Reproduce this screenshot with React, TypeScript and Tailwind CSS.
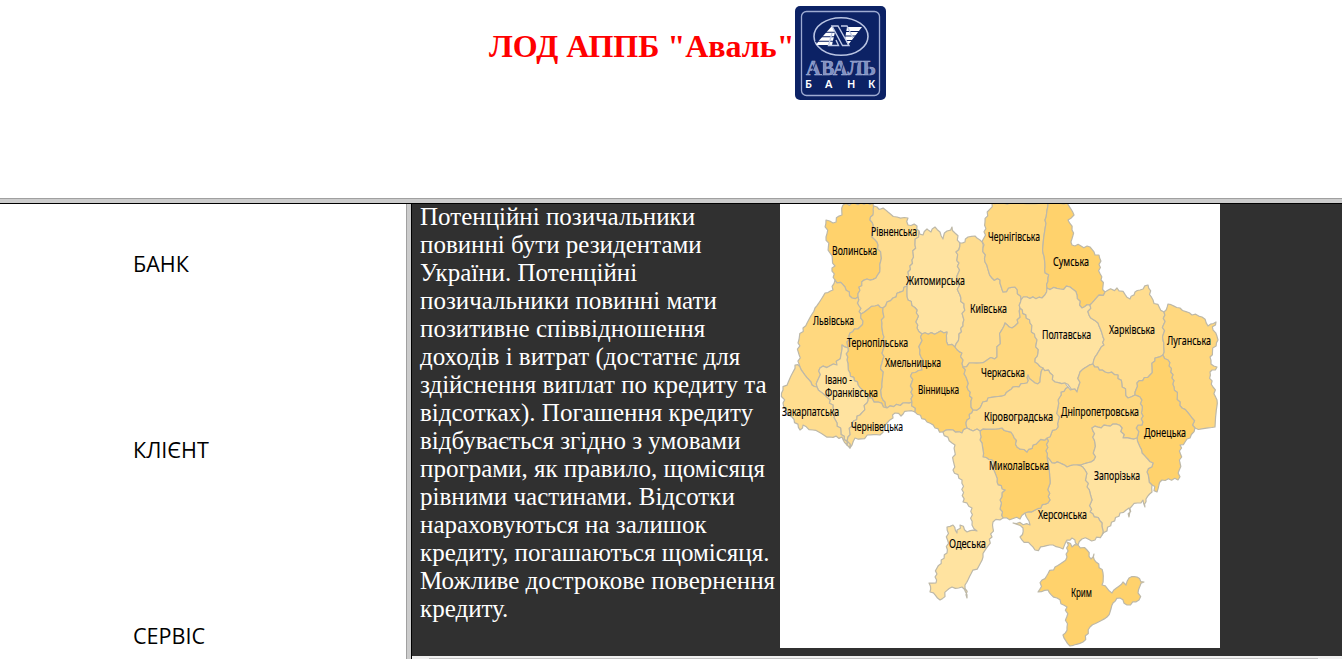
import React from "react";

type Point = [number, number];

const A = "#ffd26c";
const B = "#ffd87f";
const C = "#ffdd8f";
const D = "#ffe3a0";

const regions: { fill: string; outline: string }[] = [
  // Волинська
  { fill: A, outline: "843,205 852,203 873,203 873,215 870,220 873,228 872,237 877,242 881,255 880,268 876,278 867,279 859,287 858,297 852,298 845,287 835,280 832,268 835,266 830,253 826,237 826,220 833,223 842,215" },
  // Рівненська
  { fill: C, outline: "873,215 874,206 877,207 888,212 897,217 908,218 908,225 917,226 919,231 915,245 912,260 908,272 907,286 893,298 883,308 875,306 861,314 859,306 858,297 859,287 867,279 876,278 880,268 881,255 877,242 872,237 873,228 870,220" },
  // Житомирська
  { fill: D, outline: "919,231 923,235 927,229 931,232 935,227 940,232 943,239 947,231 952,227 955,233 960,243 956,252 959,263 957,280 960,295 964,307 963,323 959,337 955,347 948,345 947,332 922,334 917,328 917,310 908,300 907,286 908,272 912,260 915,245" },
  // Львівська
  { fill: B, outline: "835,280 833,290 825,293 815,308 803,328 798,343 800,367 812,385 817,387 820,368 837,365 842,345 848,348 847,342 850,333 860,327 863,321 861,314 859,306 858,297 852,298 845,287" },
  // Тернопільська
  { fill: A, outline: "861,314 875,306 883,308 882,323 884,337 882,363 882,387 883,400 887,408 878,402 868,398 858,385 850,373 847,360 848,348 847,342 850,333 860,327 863,321" },
  // Хмельницька
  { fill: B, outline: "907,286 893,298 883,308 882,323 884,337 882,363 882,387 883,400 887,408 903,403 912,402 912,373 922,370 923,360 920,350 922,334 917,328 917,310 908,300" },
  // Івано-Франківська
  { fill: D, outline: "817,387 830,400 833,408 837,423 847,445 850,448 848,437 852,423 860,415 867,403 868,398 858,385 850,373 847,360 848,348 842,345 837,365 820,368" },
  // Закарпатська
  { fill: C, outline: "795,365 783,390 783,403 792,417 800,430 803,425 813,430 830,437 842,437 847,445 837,423 833,408 830,400 817,387 812,385 800,367" },
  // Чернівецька
  { fill: C, outline: "850,448 855,438 880,435 883,428 893,418 895,413 901,416 908,411 915,412 912,402 903,403 887,408 878,402 868,398 867,403 860,415 852,423 848,437" },
  // Вінницька
  { fill: A, outline: "922,334 947,332 948,345 955,347 962,353 963,367 966,377 967,387 972,398 973,410 967,420 967,428 962,433 953,430 943,432 935,428 927,422 915,412 912,402 912,373 922,370 923,360 920,350" },
  // Київська
  { fill: C, outline: "960,243 965,242 968,237 975,236 980,240 983,248 985,262 992,278 1000,280 1003,292 1015,287 1021,300 1020,308 1018,323 1012,328 1005,323 1000,337 997,357 980,363 973,363 963,367 962,353 955,347 959,337 963,323 964,307 960,295 957,280 959,263 956,252" },
  // Чернігівська
  { fill: B, outline: "992,203 985,222 983,248 985,262 992,278 1000,280 1003,292 1015,287 1021,300 1027,297 1042,298 1047,288 1048,278 1045,267 1043,253 1045,220 1048,203" },
  // Сумська
  { fill: A, outline: "1048,203 1067,203 1074,215 1068,220 1072,230 1072,245 1090,247 1095,255 1099,255 1101,280 1105,292 1090,305 1082,308 1077,295 1070,287 1060,289 1047,288 1048,278 1045,267 1043,253 1045,220" },
  // Черкаська
  { fill: B, outline: "963,367 973,363 980,363 997,357 1000,337 1005,323 1012,328 1018,323 1020,308 1030,323 1035,337 1038,353 1035,362 1043,368 1040,382 1035,383 1028,375 1027,383 1013,387 1005,395 988,398 980,408 973,410 972,398 967,387 966,377" },
  // Полтавська
  { fill: D, outline: "1021,300 1027,297 1042,298 1047,288 1060,289 1070,287 1077,295 1082,308 1090,305 1089,315 1098,323 1103,337 1104,345 1095,357 1093,364 1080,372 1077,392 1065,383 1055,382 1050,373 1043,368 1035,362 1038,353 1035,337 1030,323 1020,308" },
  // Харківська
  { fill: C, outline: "1090,305 1105,292 1117,288 1130,299 1135,292 1140,290 1148,285 1153,300 1164,312 1163,340 1163,355 1155,358 1150,375 1137,383 1135,395 1128,398 1118,375 1105,372 1093,364 1095,357 1104,345 1103,337 1098,323 1089,315" },
  // Луганська
  { fill: B, outline: "1164,312 1168,304 1180,308 1192,315 1202,317 1208,326 1216,322 1213,330 1218,340 1210,357 1211,364 1217,367 1210,372 1213,387 1217,400 1215,427 1195,428 1192,418 1182,408 1174,387 1168,360 1163,355 1163,340" },
  // Донецька
  { fill: A, outline: "1163,355 1168,360 1174,387 1182,408 1192,418 1195,428 1190,438 1180,445 1180,463 1178,480 1162,480 1157,492 1152,485 1147,472 1153,463 1142,453 1137,438 1138,425 1142,425 1142,410 1140,397 1135,395 1137,383 1150,375 1155,358" },
  // Дніпропетровська
  { fill: B, outline: "1093,364 1105,372 1118,375 1128,398 1135,395 1140,397 1142,410 1142,425 1138,425 1137,438 1123,438 1122,428 1113,424 1092,428 1095,443 1094,460 1077,465 1067,467 1060,463 1052,463 1047,457 1047,438 1058,427 1058,400 1061,392 1068,387 1077,392 1080,372" },
  // Запорізька
  { fill: D, outline: "1092,428 1113,424 1122,428 1123,438 1137,438 1142,453 1153,463 1147,472 1152,485 1152,492 1146,499 1145,507 1143,500 1132,506 1129,517 1129,508 1120,513 1102,535 1102,523 1090,512 1092,500 1087,487 1085,470 1077,465 1094,460 1095,443" },
  // Херсонська
  { fill: C, outline: "1052,463 1060,463 1067,467 1077,465 1085,470 1087,487 1092,500 1090,512 1102,523 1102,535 1095,540 1082,539 1078,545 1072,538 1067,540 1063,549 1053,545 1035,550 1020,537 1023,528 1013,523 1030,525 1027,518 1025,513 1035,510 1048,503 1050,480 1047,457" },
  // Миколаївська
  { fill: A, outline: "980,431 1002,428 1013,435 1017,447 1027,452 1033,445 1047,438 1047,457 1050,480 1048,503 1035,510 1025,513 1020,519 1003,518 1000,500 1005,490 997,482 992,460 983,457 980,440" },
  // Кіровоградська
  { fill: C, outline: "967,428 967,420 973,410 980,408 988,398 1005,395 1013,387 1027,383 1028,375 1035,383 1040,382 1043,368 1050,373 1055,382 1065,383 1068,387 1061,392 1058,400 1058,427 1047,438 1033,445 1027,452 1017,447 1013,435 1002,428 980,431" },
  // Одеська
  { fill: D, outline: "943,432 953,430 962,433 967,428 980,431 980,440 983,457 992,460 997,482 1005,490 1000,500 1003,518 993,522 992,537 983,557 965,585 967,598 962,587 952,587 940,600 930,592 929,583 936,583 937,568 947,553 947,527 953,525 957,533 960,525 967,532 977,531 972,525 972,508 963,502 962,480 953,470 955,445 952,443" },
  // Крим
  { fill: A, outline: "1067,542 1072,547 1078,545 1087,550 1091,559 1094,554 1096,562 1103,573 1102,585 1112,593 1123,582 1126,585 1129,578 1137,577 1144,582 1140,586 1139,600 1127,605 1120,598 1113,603 1107,617 1090,627 1083,642 1070,646 1063,635 1067,627 1067,607 1057,598 1048,590 1038,592 1042,580 1055,567 1067,557" },
];

const labels: [string, number, number, number][] = [
  ["Рівненська", 871, 236, 46], ["Волинська", 832, 255, 45], ["Житомирська", 906, 285, 59],
  ["Чернігівська", 988, 241, 52], ["Сумська", 1053, 266, 36], ["Київська", 970, 313, 37],
  ["Львівська", 813, 325, 41], ["Тернопільська", 847, 347, 61], ["Хмельницька", 885, 367, 56],
  ["Полтавська", 1042, 339, 49], ["Харківська", 1109, 334, 46], ["Луганська", 1167, 345, 44],
  ["Черкаська", 981, 377, 44], ["Івано -", 825, 384, 27], ["Франківська", 825, 397, 53],
  ["Вінницька", 918, 394, 41], ["Закарпатська", 782, 416, 57], ["Чернівецька", 851, 431, 52],
  ["Кіровоградська", 984, 421, 69], ["Дніпропетровська", 1061, 416, 78], ["Донецька", 1144, 437, 42],
  ["Миколаївська", 989, 470, 60], ["Запорізька", 1094, 480, 46], ["Херсонська", 1038, 519, 49],
  ["Одеська", 949, 548, 37], ["Крим", 1071, 597, 21],
];

// Roughens an edge; the offset depends only on its two ends, so neighbours share one border.
function roughEdge(a: Point, b: Point): Point[] {
  const flip = a[0] > b[0] || (a[0] === b[0] && a[1] > b[1]);
  const [p, q] = flip ? [b, a] : [a, b];
  const dx = q[0] - p[0];
  const dy = q[1] - p[1];
  const len = Math.hypot(dx, dy);
  const n = Math.max(1, Math.round(len / 3.2));
  const points: Point[] = [];
  for (let i = 1; i < n; i++) {
    const s = Math.sin(p[0] * 12.9 + p[1] * 78.2 + q[0] * 3.7 + i * 37.7) * 43758.5;
    const off = (s - Math.floor(s) - 0.5) * 3.4;
    points.push([p[0] + (dx * i) / n - (dy / len) * off, p[1] + (dy * i) / n + (dx / len) * off]);
  }
  return flip ? points.reverse() : points;
}

function roughPath(outline: string): string {
  const pts = outline.split(" ").map((s) => s.split(",").map(Number) as Point);
  const all: Point[] = [];
  pts.forEach((p, i) => all.push(p, ...roughEdge(p, pts[(i + 1) % pts.length])));
  return "M" + all.map(([x, y]) => `${x.toFixed(1)} ${y.toFixed(1)}`).join("L") + "Z";
}

function UkraineMap() {
  return (
    <svg className="block h-[444px] w-[440px] shrink-0 bg-white" viewBox="780 204 440 444">
      <g stroke="#bdb8a8" strokeWidth="1.2" strokeLinejoin="round">
        {regions.map((r, i) => <path key={i} d={roughPath(r.outline)} fill={r.fill} />)}
      </g>
      <g className="font-['Noto_Sans',sans-serif] text-[13px]" fill="#000" stroke="#000" strokeWidth="0.15">
        {labels.map(([name, x, y, w]) => (
          <text key={name} x={x} y={y} textLength={w} lengthAdjust="spacingAndGlyphs">{name}</text>
        ))}
      </g>
    </svg>
  );
}

function AvalLogo() {
  return (
    <svg className="block h-[94px] w-[91px] shrink-0" viewBox="0 0 91 94">
      <rect width="91" height="94" rx="5" fill="#0c2265" />
      <rect x="6.5" y="5.5" width="78" height="84" rx="5" fill="none" stroke="#9eabd2" strokeWidth="1.3" />
      <ellipse cx="46" cy="30.5" rx="27" ry="18.8" fill="none" stroke="#b8c3e2" strokeWidth="1.6" />
      <path d="M37 20L40 26L37 39H21L24 34.5Z" fill="#fff" />
      <path d="M52 21H67L53 39L50 33Z" fill="#fff" />
      <path d="M20 35.2H40M26 30.7H40M30 26.2H40M50 25.5H66M50 30H62M50 34.5H60" stroke="#0c2265" strokeWidth="1.1" />
      <path d="M37 20H43L54 39.5H47.5ZM46 20H52L58 32M37 27L33.500 39.500H43.500L41 34" fill="none" stroke="#c2cce8" strokeWidth="1.4" />
      <text x="11" y="69" textLength="70" lengthAdjust="spacingAndGlyphs" fill="#7f8fc0" stroke="#a9b5da" strokeWidth=".5" className="font-['Liberation_Serif',serif] text-[20.5px] font-bold">АВАЛЬ</text>
      <path d="M16 69L21 56M27.500 56V69M45 69L49 56M59 69L63 56M74 56V69" stroke="#0c2265" strokeWidth=".8" />
      <g fill="#fff" className="font-['Noto_Sans',sans-serif] text-[11px] font-semibold">
        <text x="10" y="82">Б</text>
        <text x="30" y="82">А</text>
        <text x="52" y="82">Н</text>
        <text x="73" y="82">К</text>
      </g>
    </svg>
  );
}

const terms = [
  "Потенційні позичальники", "повинні бути резидентами", "України. Потенційні",
  "позичальники повинні мати", "позитивне співвідношення", "доходів і витрат (достатнє для",
  "здійснення виплат по кредиту та", "відсотках). Погашення кредиту", "відбувається згідно з умовами",
  "програми, як правило, щомісяця", "рівними частинами. Відсотки", "нараховуються на залишок",
  "кредиту, погашаються щомісяця.", "Можливе дострокове повернення", "кредиту.",
];

export default function App() {
  return (
    <div className="flex h-[659px] w-[1342px] flex-col overflow-hidden bg-white">
      <header className="flex h-[198px] shrink-0 items-start pl-[489px] pt-1.5">
        <h1 className="mt-[22px] w-[306px] shrink-0 whitespace-nowrap font-['Liberation_Serif',serif] text-[32px] font-bold leading-[36px] text-[#ff0000]">
          ЛОД АППБ "Аваль"
        </h1>
        <AvalLogo />
      </header>
      <div className="h-1.5 shrink-0 border-b border-t border-b-black border-t-[#a0a0a0] bg-[#cccccc]" />
      <div className="flex min-h-0 flex-1">
        <nav className="flex w-[406px] shrink-0 flex-col pl-[133px] pt-[45px] font-['Open_Sans',sans-serif] text-[22px] leading-[28px] text-black">
          <a className="mb-[158px] w-fit origin-left scale-x-[0.98]">БАНК</a>
          <a className="mb-[158px] w-fit origin-left scale-x-[0.98]">КЛІЄНТ</a>
          <a className="w-fit origin-left scale-x-[0.98]">СЕРВІС</a>
        </nav>
        <div className="w-1.5 shrink-0 border-l border-r border-l-[#a0a0a0] border-r-black bg-[#cccccc]" />
        <main className="flex min-w-0 flex-1 flex-col bg-[#303030]">
          <div className="flex h-[452px] shrink-0 pl-2">
            <p className="-mt-px w-[360px] shrink-0 whitespace-nowrap font-['Liberation_Serif',serif] text-[25px] leading-[28px] text-white">
              {terms.map((line) => <span key={line} className="block">{line}</span>)}
            </p>
            <UkraineMap />
          </div>
          <div className="h-[3px] bg-[#f0f0f0] pl-[17px] pt-0.5">
            <div className="h-px w-[889px] bg-[#c1c1c1]" />
          </div>
        </main>
      </div>
    </div>
  );
}
